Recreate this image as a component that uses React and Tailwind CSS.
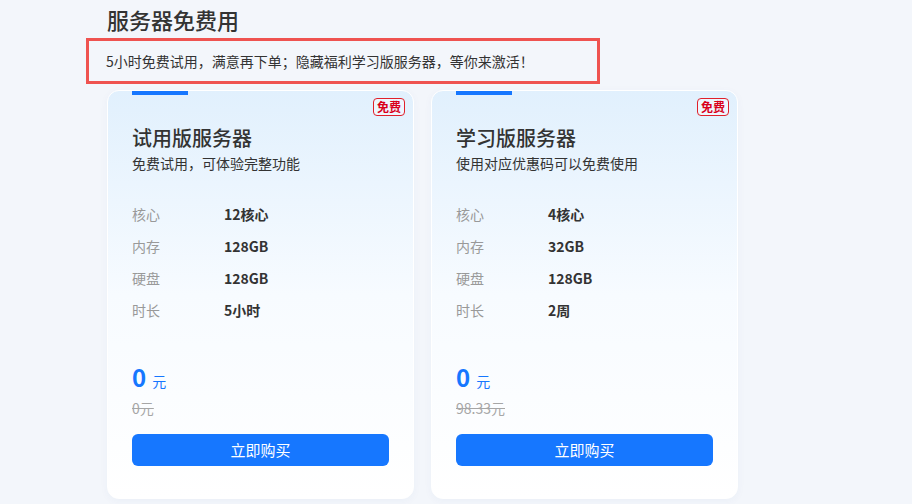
const plans = [
  {
    name: "试用版服务器",
    desc: "免费试用，可体验完整功能",
    specs: [
      ["核心", "12核心"],
      ["内存", "128GB"],
      ["硬盘", "128GB"],
      ["时长", "5小时"],
    ],
    price: "0",
    origin: "0元",
  },
  {
    name: "学习版服务器",
    desc: "使用对应优惠码可以免费使用",
    specs: [
      ["核心", "4核心"],
      ["内存", "32GB"],
      ["硬盘", "128GB"],
      ["时长", "2周"],
    ],
    price: "0",
    origin: "98.33元",
  },
];

function PlanCard({ plan }) {
  return (
    <div className="relative w-[307px] h-[409px] rounded-[12px] border border-white bg-gradient-to-b from-[#e1f0fd] via-[#f7fbff] to-white shadow-[0_2px_8px_rgba(30,80,160,0.04)] flex flex-col px-6">
      <div className="w-14 h-[4px] bg-[#1677ff]" />
      <span className="absolute top-[7px] right-[8px] px-[3px] h-[18px] leading-[16px] rounded-[4px] border border-[#e0202a] text-[#d9001b] text-[12px] font-bold bg-white/40">
        免费
      </span>
      <div className="mt-[31px] text-[20px] leading-[24px] font-medium text-[#333]">{plan.name}</div>
      <div className="mt-[2px] text-[14px] leading-[22px] text-[#333]">{plan.desc}</div>
      <div className="mt-[24px] flex flex-col">
        {plan.specs.map(([k, v]) => (
          <div key={k} className="flex h-[32px] items-center text-[14px]">
            <span className="w-[92px] text-[#999]">{k}</span>
            <span className="font-bold text-[#333]">{v}</span>
          </div>
        ))}
      </div>
      <div className="mt-[37px] flex items-baseline gap-[6px] text-[#1677ff]">
        <span className="text-[24px] leading-[28px] font-bold">{plan.price}</span>
        <span className="text-[14px]">元</span>
      </div>
      <div className="mt-[6px] text-[14px] leading-[20px] text-[#a6a6a6] line-through">{plan.origin}</div>
      <button className="mt-[16px] h-[32px] w-full rounded-[6px] bg-[#1677ff] text-white text-[15px]">
        立即购买
      </button>
    </div>
  );
}

export default function App() {
  return (
    <div
      className="w-[912px] h-[504px] overflow-hidden bg-[#f3f6fb] pl-[107px]"
      style={{ fontFamily: '"Noto Sans CJK SC", "Noto Sans", sans-serif' }}
    >
      <h1 className="pt-[4px] text-[22px] leading-[30px] font-medium text-[#333]">服务器免费用</h1>
      <div className="mt-[4px] -ml-[21px] w-[514px] h-[46px] border-[3px] border-[#ef5350] flex items-center pl-[17px] text-[14px] text-[#333]">
        5小时免费试用，满意再下单；隐藏福利学习版服务器，等你来激活！
      </div>
      <div className="mt-[6px] flex gap-[17px]">
        {plans.map((p) => (
          <PlanCard key={p.name} plan={p} />
        ))}
      </div>
    </div>
  );
}
